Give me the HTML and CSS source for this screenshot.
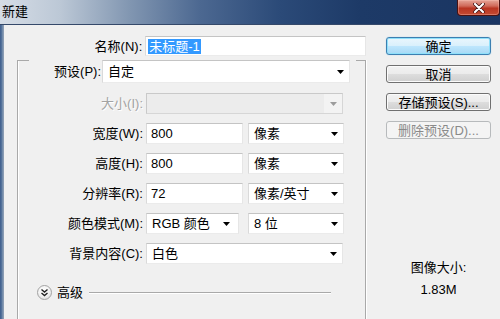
FILE: index.html
```html
<!DOCTYPE html>
<html lang="zh-CN">
<head>
<meta charset="utf-8">
<title>新建</title>
<link rel="stylesheet" href="styles.css">
</head>
<body>
<div class="window">
  <div class="titlebar">
    <div class="title">新建</div>
    <div class="close">
      <svg width="14" height="10" viewBox="0 0 14 10"><path d="M3 1 L11 9 M11 1 L3 9" stroke="#3a0e0e" stroke-width="3.6" stroke-linecap="round"/><path d="M3 1 L11 9 M11 1 L3 9" stroke="#ffffff" stroke-width="2.2" stroke-linecap="round"/></svg>
    </div>
  </div>
  <div class="frame">
    <div class="frame-edge"></div>
    <div class="content">
      <div class="form">
        <div class="name-row">
          <div class="label">名称(N):</div>
          <div class="field name-field"><span class="sel">未标题-1</span></div>
        </div>
        <div class="group">
          <div class="group-head">
            <div class="seg seg-left"></div>
            <div class="label head-label">预设(P):</div>
            <div class="select preset"><span>自定</span><svg class="arrow" width="7" height="4" viewBox="0 0 7 4"><polygon points="0,0 7,0 3.5,4" fill="#000"/></svg></div>
            <div class="seg seg-right"></div>
          </div>
          <div class="rows">
            <div class="row">
              <div class="label disabled">大小(I):</div>
              <div class="select disabled-select wide"><span></span><span class="dis-arrow-box"><svg class="arrow" width="7" height="4" viewBox="0 0 7 4"><polygon points="0,0 7,0 3.5,4" fill="#9c9c9c"/></svg></span></div>
            </div>
            <div class="row">
              <div class="label">宽度(W):</div>
              <div class="field num">800</div>
              <div class="select unit"><span>像素</span><svg class="arrow" width="7" height="4" viewBox="0 0 7 4"><polygon points="0,0 7,0 3.5,4" fill="#000"/></svg></div>
            </div>
            <div class="row">
              <div class="label">高度(H):</div>
              <div class="field num">800</div>
              <div class="select unit"><span>像素</span><svg class="arrow" width="7" height="4" viewBox="0 0 7 4"><polygon points="0,0 7,0 3.5,4" fill="#000"/></svg></div>
            </div>
            <div class="row">
              <div class="label">分辨率(R):</div>
              <div class="field num">72</div>
              <div class="select unit"><span>像素/英寸</span><svg class="arrow" width="7" height="4" viewBox="0 0 7 4"><polygon points="0,0 7,0 3.5,4" fill="#000"/></svg></div>
            </div>
            <div class="row">
              <div class="label">颜色模式(M):</div>
              <div class="select mode"><span>RGB 颜色</span><svg class="arrow" width="7" height="4" viewBox="0 0 7 4"><polygon points="0,0 7,0 3.5,4" fill="#000"/></svg></div>
              <div class="select unit bits"><span>8 位</span><svg class="arrow" width="7" height="4" viewBox="0 0 7 4"><polygon points="0,0 7,0 3.5,4" fill="#000"/></svg></div>
            </div>
            <div class="row">
              <div class="label">背景内容(C):</div>
              <div class="select wide"><span>白色</span><svg class="arrow" width="7" height="4" viewBox="0 0 7 4"><polygon points="0,0 7,0 3.5,4" fill="#000"/></svg></div>
            </div>
          </div>
          <div class="advanced">
            <div class="adv-icon">
              <svg width="15" height="15" viewBox="0 0 15 15"><polyline points="4.5,4.5 7.5,7 10.5,4.5" fill="none" stroke="#222" stroke-width="1.4"/><polyline points="4.5,8 7.5,10.5 10.5,8" fill="none" stroke="#222" stroke-width="1.4"/></svg>
            </div>
            <div class="adv-text">高级</div>
            <div class="adv-line"></div>
          </div>
        </div>
      </div>
      <div class="side">
        <div class="btn default">确定</div>
        <div class="btn">取消</div>
        <div class="btn">存储预设(S)...</div>
        <div class="btn disabled-btn">删除预设(D)...</div>
        <div class="info">
          <div>图像大小:</div>
          <div>1.83M</div>
        </div>
      </div>
    </div>
  </div>
</div>
</body>
</html>
```
FILE: styles.css
```css
* { box-sizing: border-box; }
html, body { margin: 0; padding: 0; }
body {
  width: 500px;
  height: 319px;
  overflow: hidden;
  font-family: "Liberation Sans", "Noto Sans CJK SC", sans-serif;
  font-size: 13px;
  line-height: 15px;
  color: #000;
  background: #f0f0f0;
}
.window {
  width: 500px;
  height: 319px;
  display: flex;
  flex-direction: column;
}
.titlebar {
  height: 25px;
  flex: none;
  display: flex;
  justify-content: space-between;
  align-items: flex-start;
  background: linear-gradient(90deg, #d6dde6 0px, #bcc8d6 60px, #8196b1 130px, #4c6891 200px, #2b4a78 280px, #1d3a67 360px, #1a3562 500px);
  border-bottom: 1px solid #35496a;
}
.title {
  padding: 4px 0 0 2px;
  font-size: 13px;
  line-height: 15px;
  color: #000;
}
.close {
  width: 43px;
  height: 16px;
  border: 1px solid #4a1212;
  border-top: none;
  border-radius: 0 0 4px 4px;
  background: linear-gradient(180deg, #e6a597 0%, #d06a5a 40%, #b93522 55%, #c44b33 100%);
  box-shadow: inset 0 0 0 1px rgba(255, 200, 190, 0.35);
  display: flex;
  align-items: center;
  justify-content: center;
}
.frame {
  flex: 1;
  display: flex;
  min-height: 0;
}
.frame-edge {
  width: 4px;
  flex: none;
  background: linear-gradient(90deg, #3d5d8c 0, #5a789f 2px, #8a9cb3 3px, #8a9cb3 4px);
}
.content {
  flex: 1;
  display: flex;
  background: #f0f0f0;
  overflow: hidden;
  padding-top: 11px;
}
.form {
  width: 362px;
  flex: none;
  padding-left: 13px;
}
.label {
  text-align: right;
  white-space: nowrap;
}
.name-row {
  display: flex;
  align-items: center;
  height: 20px;
}
.name-row .label {
  width: 126px;
  margin-right: 3px;
}
.field {
  height: 21px;
  background: #fff;
  border: 1px solid;
  border-color: #c4c4c4 #e6e6e6 #ebebeb #dadada;
  padding-left: 4px;
  display: flex;
  align-items: center;
  white-space: nowrap;
}
.name-field {
  width: 222px;
  height: 20px;
  padding-left: 2px;
}
.sel {
  background: #3399ff;
  color: #fff;
  padding: 0 1px;
  line-height: 15px;
}
.group {
  margin-top: 12px;
  width: 349px;
  border: 1px solid #a9a9a9;
  border-top: none;
  box-shadow: 1px 0 0 #ffffff, inset 1px 0 0 #ffffff;
  padding-bottom: 60px;
}
.group-head {
  display: flex;
  margin-top: -8px;
  height: 23px;
}
.seg {
  align-self: flex-start;
  border-top: 1px solid #a9a9a9;
  height: 1px;
}
.seg-left {
  width: 12px;
  margin-left: -1px;
}
.seg-right {
  flex: 1;
  margin-left: 6px;
  margin-right: -1px;
}
.head-label {
  width: 72px;
  line-height: 23px;
  margin-right: 1px;
}
.select {
  height: 21px;
  background: #fff;
  border: 1px solid;
  border-color: #c4c4c4 #e6e6e6 #ebebeb #dadada;
  padding: 0 5px 0 5px;
  display: flex;
  align-items: center;
  justify-content: space-between;
  white-space: nowrap;
}
.arrow { flex: none; display: block; }
.preset {
  width: 248px;
  height: 23px;
}
.rows {
  display: flex;
  flex-direction: column;
  gap: 9px;
  margin-top: 10px;
}
.row {
  display: flex;
  align-items: center;
  height: 21px;
}
.row .label {
  width: 125px;
  margin-right: 3px;
}
.label.disabled {
  color: #a3a3a3;
  text-shadow: 1px 1px 0 #ffffff;
}
.wide { width: 197px; }
.num { width: 97px; }
.unit {
  width: 96px;
  margin-left: 5px;
}
.mode { width: 93px; padding-right: 8px; }
.bits { margin-left: 9px; }
.disabled-select {
  background: #ececec;
  border-color: #c9c9c9 #d6d6d6 #d6d6d6 #c9c9c9;
  padding-right: 0;
}
.dis-arrow-box {
  width: 18px;
  height: 19px;
  background: #f3f3f3;
  display: flex;
  align-items: center;
  justify-content: center;
}
.advanced {
  display: flex;
  align-items: center;
  margin-top: 21px;
  height: 15px;
  padding-left: 19px;
  padding-right: 34px;
}
.adv-icon {
  width: 15px;
  height: 15px;
  border-radius: 50%;
  border: 1px solid #a3a3a3;
  background: radial-gradient(circle at 45% 35%, #ffffff 0%, #f2f2f2 50%, #d4d4d4 100%);
  display: flex;
  align-items: center;
  justify-content: center;
  flex: none;
}
.adv-icon svg { margin: -1px; }
.adv-text {
  margin-left: 5px;
}
.adv-line {
  flex: 1;
  margin-left: 6px;
  border-top: 1px solid #a9a9a9;
  height: 1px;
  box-shadow: 0 1px 0 #ffffff;
}
.side {
  width: 105px;
  margin-left: 20px;
  flex: none;
  display: flex;
  flex-direction: column;
  gap: 10px;
  padding-top: 1px;
}
.btn {
  height: 18px;
  border: 1px solid #707070;
  border-radius: 3px;
  background: linear-gradient(180deg, #f2f2f2 0%, #ebebeb 50%, #dddddd 51%, #cfcfcf 100%);
  box-shadow: inset 0 0 0 1px #fbfbfb;
  display: flex;
  align-items: center;
  justify-content: center;
  white-space: nowrap;
  line-height: 15px;
}
.btn.default {
  border-color: #3c7fb1;
  background: linear-gradient(180deg, #eaf6fd 0%, #d9f0fc 50%, #bee6fd 51%, #a7d9f5 100%);
  box-shadow: inset 0 0 0 1px #8fe0fa, 0 0 1px #7fc4e8;
}
.btn.disabled-btn {
  border-color: #b7babc;
  background: #f4f4f4;
  box-shadow: none;
  color: #8a8a8a;
}
.info {
  margin-top: 108px;
  text-align: center;
  line-height: 22px;
}
```
